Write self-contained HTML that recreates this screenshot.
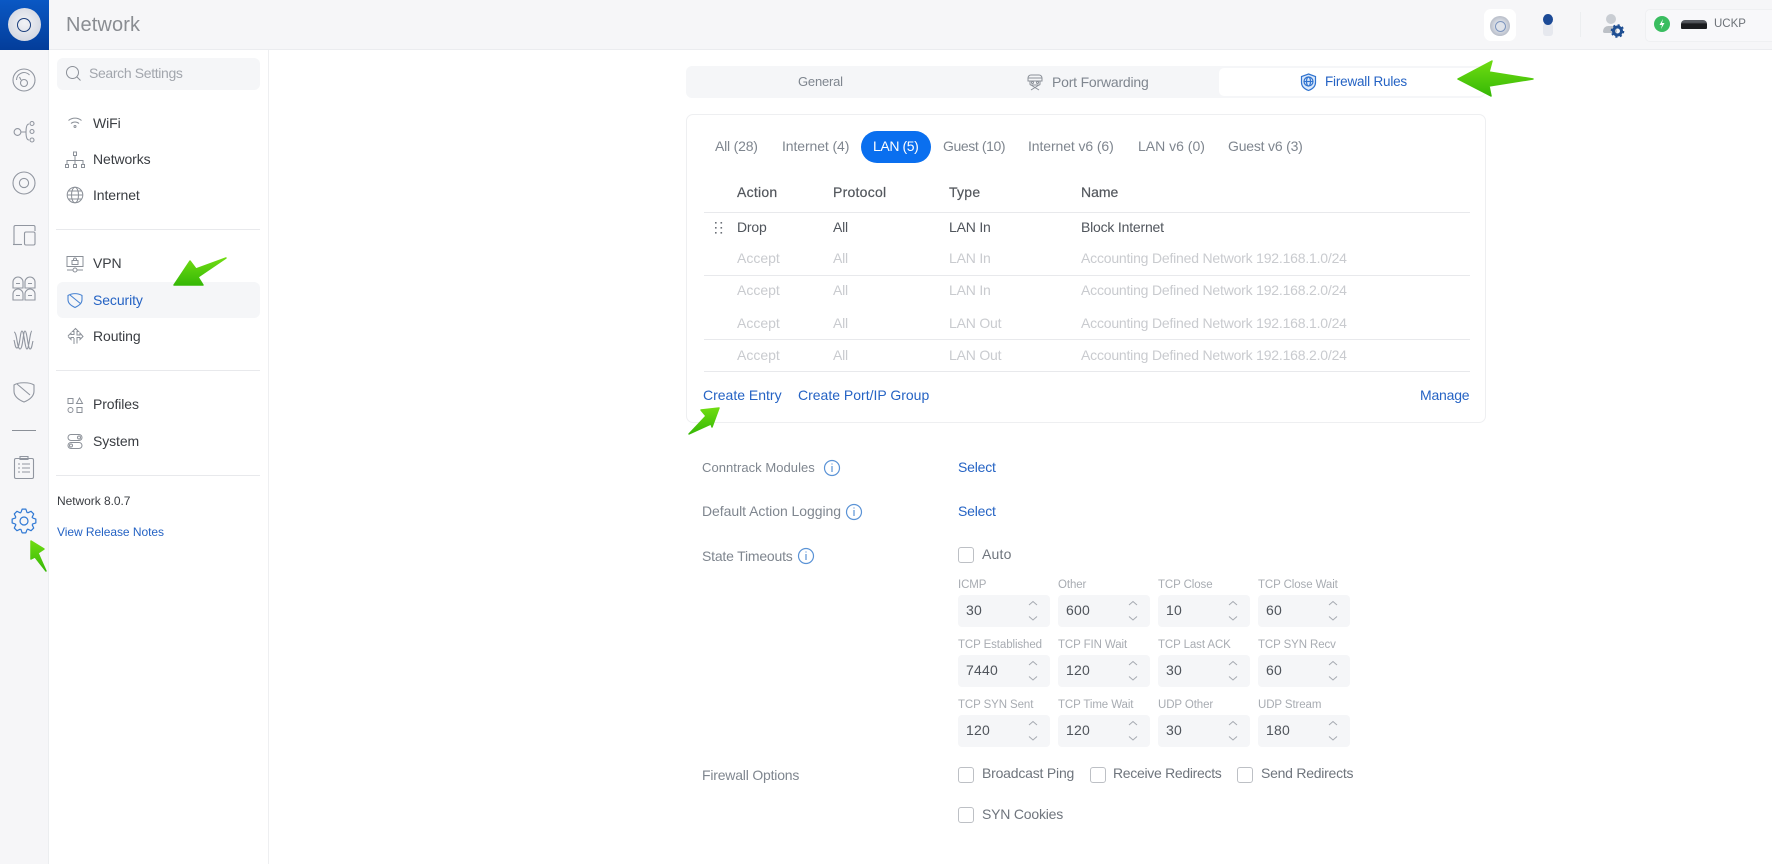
<!DOCTYPE html>
<html><head><meta charset="utf-8"><title>Network</title>
<style>
html,body{margin:0;padding:0;width:1772px;height:864px;overflow:hidden;background:#fff;font-family:"Liberation Sans",sans-serif;font-size:14px;letter-spacing:-.2px}
.t{position:absolute;white-space:nowrap;line-height:20px;height:20px}
.b{position:absolute}
.nav{color:#3a3d42;left:93px;letter-spacing:-.1px}
.blue{color:#2563c4}
.m{color:#7f868f}
.d{color:#50555c}
.l{color:#c9cbcf}
.h{color:#53575d;letter-spacing:.25px;-webkit-text-stroke:.2px #53575d}
.s{color:#a8acb2;font-size:11.5px;letter-spacing:-.1px}
.v{color:#50555c;font-size:14px;letter-spacing:.2px}
.o{color:#6f757d}
.box{position:absolute;background:#f5f6f8;border-radius:4px;width:92px;height:32px}
.cb{position:absolute;width:14px;height:14px;border:1px solid #bdc0c5;border-radius:3px;background:#fff}
.ln{position:absolute;height:1px;background:#e8e9ec}
svg{position:absolute;overflow:visible}
.ic{fill:none;stroke:#8b9098;stroke-width:1}
.ir{fill:none;stroke:#9196a0;stroke-width:1.1}
.ib{fill:none;stroke:#2f73cf;stroke-width:1.2}
</style></head><body>

<!-- header + rail -->
<div class="b" style="left:0;top:0;width:1772px;height:49px;background:#f6f6f8;border-bottom:1px solid #ebecef"></div>
<div class="b" style="left:0;top:50px;width:48px;height:814px;background:#f6f6f8;border-right:1px solid #eceef0"></div>
<div class="b" style="left:268px;top:50px;width:1px;height:814px;background:#eeeff1"></div>
<div class="b" style="left:0;top:0;width:49px;height:50px;background:linear-gradient(180deg,#0a58c4,#033d9a)"></div>
<div class="b" style="left:8px;top:8px;width:33px;height:33px;border-radius:50%;background:radial-gradient(circle at 50% 45%,#f2f3f6,#c9cedb)"></div>
<div class="b" style="left:17px;top:18px;width:12px;height:12px;border-radius:50%;border:1.5px solid #1c3f7d"></div>
<div class="t" style="left:66px;top:15px;font-size:20px;letter-spacing:.1px;color:#8a8d92">Network</div>

<!-- header right -->
<div class="b" style="left:1484px;top:9px;width:32px;height:32px;border-radius:7px;background:#fff"></div>
<div class="b" style="left:1490px;top:16px;width:20px;height:20px;border-radius:50%;background:radial-gradient(circle,#dfe3ea 30%,#aab0bd 85%)"></div>
<div class="b" style="left:1495px;top:21px;width:9px;height:9px;border-radius:50%;border:1px solid #7d95be"></div>
<div class="b" style="left:1543px;top:23px;width:10px;height:13px;border-radius:3px;background:#e6e8ee"></div>
<div class="b" style="left:1543px;top:14px;width:10px;height:11px;border-radius:50%;background:#1c4a96"></div>
<div class="b" style="left:1606px;top:14px;width:10px;height:10px;border-radius:50%;background:#c9cdd3"></div>
<div class="b" style="left:1603px;top:26px;width:14px;height:7px;border-radius:6px 6px 2px 2px;background:#bcc0c6"></div>
<svg style="left:1610px;top:22px" width="16" height="16" viewBox="0 0 16 16"><circle cx="7.500" cy="9" r="4" fill="none" stroke="#1f4f93" stroke-width="3"/><circle cx="7.500" cy="9" r="6" fill="none" stroke="#1f4f93" stroke-width="1.600" stroke-dasharray="2.200 2.500"/></svg>
<div class="b" style="left:1580px;top:12px;width:1px;height:25px;background:#eceef0"></div>
<div class="b" style="left:1645px;top:9px;width:127px;height:31px;background:#f8f8fa;border:1px solid #eff0f2;border-right:0;border-radius:5px 0 0 5px"></div>
<div class="b" style="left:1654px;top:16px;width:16px;height:16px;border-radius:50%;background:#3abd60"></div>
<svg style="left:1654px;top:16px" width="16" height="16" viewBox="0 0 16 16"><path d="M9 3 5.500 9H8l-1 4 3.500-6H8z" fill="#fff"/></svg>
<div class="b" style="left:1681px;top:20px;width:26px;height:9px;background:linear-gradient(180deg,#55585e 0,#55585e 25%,#1b1c1f 45%);border-radius:4px 4px 1px 1px"></div>
<div class="t" style="left:1714px;top:14px;font-size:11.500px;letter-spacing:0;color:#6d7278">UCKP</div>

<!-- rail icons -->
<svg style="left:0;top:0" width="49" height="600" viewBox="0 0 49 600">
<g class="ir">
<circle cx="24" cy="80" r="11"/><path d="M16.500 80a7.500 7.500 0 0 1 13-5"/><circle cx="24" cy="83" r="3.500"/><path d="M21 80l-1.500-3"/>
<circle cx="17.500" cy="132" r="3.400"/><path d="M21 132h5M26 132c0-5 1-8 3-8M26 132c0 5 1 8 3 8"/><circle cx="32" cy="123.500" r="2"/><circle cx="32" cy="131.500" r="2"/><circle cx="32" cy="140" r="2"/>
<circle cx="24" cy="183" r="11"/><circle cx="24" cy="183" r="4.600"/>
<path d="M14 244v-17a1.500 1.500 0 0 1 1.500-1.500h18a1.500 1.500 0 0 1 1.500 1.500v4"/><rect x="24.500" y="232" width="10.500" height="13" rx="1.500"/><path d="M13 244.500h9"/>
<path d="M13 288v-6a5 5 0 0 1 10 0v6zM25 288v-6a5 5 0 0 1 10 0v6zM13 300v-6a5 5 0 0 1 10 0v6zM25 300v-6a5 5 0 0 1 10 0v6zM16 283.500h4M28 283.500h4M16 295.500h4M28 295.500h4"/>
<path d="M14 332c3 0 3 17 6 17s3-18 5-18 3 18 5 18 2-5 3-8M14 340c1 3 1 8 3 8 3 0 3-17 5-17s3 18 5 18 3-18 5-18"/>
<path d="M14 385c4-3 16-3 20 0v6c0 6-5 9-10 11-5-2-10-5-10-11zM17 384l13 11"/>
<rect x="14.500" y="458.500" width="19" height="20" rx="1.500"/><path d="M20 456.500h8v3h-8zM22 464h8M22 468h8M22 472h8M18 464h2M18 468h2M18 472h2"/>
</g>
<path d="M12 430.500h24" stroke="#8b9098" stroke-width="1"/>
<g style="fill:none;stroke:#2f78d4;stroke-width:1.200;stroke-linejoin:round" transform="translate(24 521)"><circle r="4"/>
<path d="M-3.080 -8.460L-1.880 -11.850L1.880 -11.850L3.080 -8.460L3.800 -8.160"/>
<path transform="rotate(45)" d="M-3.080 -8.460L-1.880 -11.850L1.880 -11.850L3.080 -8.460L3.800 -8.160"/>
<path transform="rotate(90)" d="M-3.080 -8.460L-1.880 -11.850L1.880 -11.850L3.080 -8.460L3.800 -8.160"/>
<path transform="rotate(135)" d="M-3.080 -8.460L-1.880 -11.850L1.880 -11.850L3.080 -8.460L3.800 -8.160"/>
<path transform="rotate(180)" d="M-3.080 -8.460L-1.880 -11.850L1.880 -11.850L3.080 -8.460L3.800 -8.160"/>
<path transform="rotate(225)" d="M-3.080 -8.460L-1.880 -11.850L1.880 -11.850L3.080 -8.460L3.800 -8.160"/>
<path transform="rotate(270)" d="M-3.080 -8.460L-1.880 -11.850L1.880 -11.850L3.080 -8.460L3.800 -8.160"/>
<path transform="rotate(315)" d="M-3.080 -8.460L-1.880 -11.850L1.880 -11.850L3.080 -8.460L3.800 -8.160"/>
</g>
</svg>

<!-- settings nav -->
<div class="b" style="left:57px;top:58px;width:203px;height:32px;background:#f5f6f8;border-radius:6px"></div>
<svg style="left:65px;top:65px" width="18" height="18" viewBox="0 0 18 18"><circle cx="7.500" cy="7.500" r="6" class="ic"/><path d="M12 12l3.500 3.500" class="ic"/></svg>
<div class="t" style="left:89px;top:63px;color:#a2a6ad;letter-spacing:-.35px">Search Settings</div>

<div class="t nav" style="top:113px">WiFi</div>
<div class="t nav" style="top:149px">Networks</div>
<div class="t nav" style="top:185px">Internet</div>
<div class="ln" style="left:56px;top:229px;width:204px"></div>
<div class="t nav" style="top:253px">VPN</div>
<div class="b" style="left:57px;top:282px;width:203px;height:36px;background:#f5f6f8;border-radius:6px"></div>
<div class="t nav blue" style="top:290px;color:#2563c4">Security</div>
<div class="t nav" style="top:326px">Routing</div>
<div class="ln" style="left:56px;top:370px;width:204px"></div>
<div class="t nav" style="top:394px">Profiles</div>
<div class="t nav" style="top:431px">System</div>
<div class="ln" style="left:56px;top:475px;width:204px"></div>
<div class="t" style="left:57px;top:491px;font-size:12px;letter-spacing:-.05px;color:#3a3d42">Network 8.0.7</div>
<div class="t blue" style="left:57px;top:522px;font-size:12px;letter-spacing:-.05px">View Release Notes</div>

<svg style="left:60px;top:110px" width="30" height="400" viewBox="60 110 30 400">
<g class="ic">
<path d="M68.500 120.500a10 10 0 0 1 13 0M71 123.500a6 6 0 0 1 8 0"/><circle cx="75" cy="126.500" r="1"/>
<path d="M75 155.500v5M67 164.500v-4h16v4M75 160.500v4"/><rect x="73.500" y="152" width="3" height="3.500"/><rect x="65.500" y="164.500" width="3" height="3"/><rect x="73.500" y="164.500" width="3" height="3"/><rect x="81.500" y="164.500" width="3" height="3"/>
<circle cx="75" cy="195" r="7.800"/><ellipse cx="75" cy="195" rx="3.500" ry="7.800"/><path d="M67.200 195h15.600M68.500 191h13M68.500 199h13"/>
<rect x="67" y="256.500" width="16" height="10"/><rect x="72" y="260.500" width="6" height="4"/><path d="M73.500 260.500v-1a1.500 1.500 0 0 1 3 0v1M67 270h6M77 270h6"/><circle cx="75" cy="270" r="2"/>
<path d="M68 336l3-3v1.500h3v-3h-1.500l3-3 3 3H77v3.500h3V333l3 3.500-3 3v-2H77v6M74 338v6M68 336.500l3 3v-2h3"/>
<rect x="68" y="398.500" width="5" height="5"/><path d="M79.500 398l3 5.500h-6z"/><circle cx="70.500" cy="410" r="2.500"/><rect x="77" y="407.500" width="5" height="5"/>
<rect x="68" y="434.500" width="14" height="6" rx="3"/><rect x="68" y="442.500" width="14" height="6" rx="3"/><circle cx="79" cy="437.500" r="1.500"/><circle cx="71" cy="445.500" r="1.500"/>
</g>
<g style="fill:none;stroke:#4a84d2;stroke-width:1.100"><path d="M68 295.500c4-2.500 10-2.500 14 0v4c0 4-3 6-7 8-4-2-7-4-7-8zM70 295l11 9"/></g>
</svg>

<!-- tabs -->
<div class="b" style="left:686px;top:66px;width:799px;height:32px;background:#f5f6f8;border-radius:6px"></div>
<div class="b" style="left:1219px;top:68px;width:266px;height:28px;background:#fff;border-radius:5px"></div>
<div class="t m" style="left:798px;top:72px;font-size:13px">General</div>
<svg style="left:1026px;top:73px" width="18" height="18" viewBox="0 0 18 18"><g class="ic"><path d="M2 5a3 3 0 0 1 3-3h8a3 3 0 0 1 3 3v3H2zM4 8v3a1 1 0 0 0 1 1h8a1 1 0 0 0 1-1V8M5 12l8 5M13 12l-8 5M2 5h14"/><circle cx="6.500" cy="9.500" r="1"/><circle cx="11.500" cy="9.500" r="1"/></g></svg>
<div class="t m" style="left:1052px;top:72px">Port Forwarding</div>
<svg style="left:1300px;top:73px" width="17" height="18" viewBox="0 0 17 18"><path d="M8.500 1l7 2.500v6c0 4-3 6.500-7 8-4-1.500-7-4-7-8v-6z" fill="#dbe9fb" stroke="#2f73cf" stroke-width="1.200"/><circle cx="8.500" cy="8.500" r="4.500" class="ib"/><ellipse cx="8.500" cy="8.500" rx="2" ry="4.500" class="ib"/><path d="M4 8.500h9" class="ib"/></svg>
<div class="t blue" style="left:1325px;top:72px;font-size:13.500px">Firewall Rules</div>

<!-- card -->
<div class="b" style="left:686px;top:114px;width:798px;height:307px;border:1px solid #eeeff1;border-radius:7px"></div>
<div class="t m" style="left:715px;top:136px">All (28)</div>
<div class="t m" style="left:782px;top:136px;letter-spacing:-.1px">Internet (4)</div>
<div class="b" style="left:861px;top:131px;width:70px;height:32px;border-radius:16px;background:#0a6fef"></div>
<div class="t" style="left:873px;top:136px;color:#fff;letter-spacing:-.4px">LAN (5)</div>
<div class="t m" style="left:943px;top:136px;letter-spacing:-.4px">Guest (10)</div>
<div class="t m" style="left:1028px;top:136px;letter-spacing:-.1px">Internet v6 (6)</div>
<div class="t m" style="left:1138px;top:136px;letter-spacing:0">LAN v6 (0)</div>
<div class="t m" style="left:1228px;top:136px">Guest v6 (3)</div>

<div class="t h" style="left:737px;top:182px">Action</div>
<div class="t h" style="left:833px;top:182px">Protocol</div>
<div class="t h" style="left:949px;top:182px">Type</div>
<div class="t h" style="left:1081px;top:182px;letter-spacing:0">Name</div>
<div class="ln" style="left:704px;top:212px;width:766px"></div>

<svg style="left:715px;top:222px" width="8" height="12"><g fill="#6b7077"><rect x="0" y="0" width="1.600" height="1.600"/><rect x="5.500" y="0" width="1.600" height="1.600"/><rect x="0" y="5" width="1.600" height="1.600"/><rect x="5.500" y="5" width="1.600" height="1.600"/><rect x="0" y="10" width="1.600" height="1.600"/><rect x="5.500" y="10" width="1.600" height="1.600"/></g></svg>
<div class="t d" style="left:737px;top:217px">Drop</div><div class="t d" style="left:833px;top:217px">All</div><div class="t d" style="left:949px;top:217px">LAN In</div><div class="t d" style="left:1081px;top:217px">Block Internet</div>
<div class="t l" style="left:737px;top:248px;letter-spacing:0">Accept</div><div class="t l" style="left:833px;top:248px">All</div><div class="t l" style="left:949px;top:248px">LAN In</div><div class="t l" style="left:1081px;top:248px">Accounting Defined Network 192.168.1.0/24</div>
<div class="ln" style="left:704px;top:275px;width:766px"></div>
<div class="t l" style="left:737px;top:280px;letter-spacing:0">Accept</div><div class="t l" style="left:833px;top:280px">All</div><div class="t l" style="left:949px;top:280px">LAN In</div><div class="t l" style="left:1081px;top:280px">Accounting Defined Network 192.168.2.0/24</div>
<div class="t l" style="left:737px;top:313px;letter-spacing:0">Accept</div><div class="t l" style="left:833px;top:313px">All</div><div class="t l" style="left:949px;top:313px">LAN Out</div><div class="t l" style="left:1081px;top:313px">Accounting Defined Network 192.168.1.0/24</div>
<div class="ln" style="left:704px;top:339px;width:766px"></div>
<div class="t l" style="left:737px;top:345px;letter-spacing:0">Accept</div><div class="t l" style="left:833px;top:345px">All</div><div class="t l" style="left:949px;top:345px">LAN Out</div><div class="t l" style="left:1081px;top:345px">Accounting Defined Network 192.168.2.0/24</div>
<div class="ln" style="left:704px;top:371px;width:766px"></div>

<div class="t blue" style="left:703px;top:385px;letter-spacing:0">Create Entry</div>
<div class="t blue" style="left:798px;top:385px;letter-spacing:0">Create Port/IP Group</div>
<div class="t blue" style="left:1420px;top:385px">Manage</div>

<!-- options -->
<div class="t m" style="left:702px;top:458px;font-size:13px;letter-spacing:.05px">Conntrack Modules</div>
<div class="t m" style="left:702px;top:501px;letter-spacing:-.05px">Default Action Logging</div>
<div class="t m" style="left:702px;top:546px">State Timeouts</div>
<div class="t m" style="left:702px;top:765px">Firewall Options</div>
<svg style="left:820px;top:455px" width="60" height="120" viewBox="820 455 60 120"><g class="ib" style="stroke:#5b93d6"><circle cx="832" cy="468" r="7.500"/><path d="M832 466v6M832 463.500v1"/><circle cx="854" cy="512" r="7.500"/><path d="M854 510v6M854 507.500v1"/></g></svg>
<svg style="left:790px;top:545px" width="30" height="30"><g class="ib" style="stroke:#5b93d6"><circle cx="16" cy="11" r="7.500"/><path d="M16 9v6M16 6.500v1"/></g></svg>
<div class="t blue" style="left:958px;top:457px">Select</div>
<div class="t blue" style="left:958px;top:501px">Select</div>
<div class="cb" style="left:958px;top:547px"></div>
<div class="t o" style="left:982px;top:544px;letter-spacing:.2px">Auto</div>

<!-- timeouts -->
<div class="t s" style="left:958px;top:575px">ICMP</div><div class="t s" style="left:1058px;top:575px">Other</div><div class="t s" style="left:1158px;top:575px">TCP Close</div><div class="t s" style="left:1258px;top:575px">TCP Close Wait</div>
<div class="box" style="left:958px;top:595px"></div><div class="box" style="left:1058px;top:595px"></div><div class="box" style="left:1158px;top:595px"></div><div class="box" style="left:1258px;top:595px"></div>
<div class="t v" style="left:966px;top:600px">30</div><div class="t v" style="left:1066px;top:600px">600</div><div class="t v" style="left:1166px;top:600px">10</div><div class="t v" style="left:1266px;top:600px">60</div>

<div class="t s" style="left:958px;top:635px">TCP Established</div><div class="t s" style="left:1058px;top:635px">TCP FIN Wait</div><div class="t s" style="left:1158px;top:635px">TCP Last ACK</div><div class="t s" style="left:1258px;top:635px">TCP SYN Recv</div>
<div class="box" style="left:958px;top:655px"></div><div class="box" style="left:1058px;top:655px"></div><div class="box" style="left:1158px;top:655px"></div><div class="box" style="left:1258px;top:655px"></div>
<div class="t v" style="left:966px;top:660px">7440</div><div class="t v" style="left:1066px;top:660px">120</div><div class="t v" style="left:1166px;top:660px">30</div><div class="t v" style="left:1266px;top:660px">60</div>

<div class="t s" style="left:958px;top:695px">TCP SYN Sent</div><div class="t s" style="left:1058px;top:695px">TCP Time Wait</div><div class="t s" style="left:1158px;top:695px">UDP Other</div><div class="t s" style="left:1258px;top:695px">UDP Stream</div>
<div class="box" style="left:958px;top:715px"></div><div class="box" style="left:1058px;top:715px"></div><div class="box" style="left:1158px;top:715px"></div><div class="box" style="left:1258px;top:715px"></div>
<div class="t v" style="left:966px;top:720px">120</div><div class="t v" style="left:1066px;top:720px">120</div><div class="t v" style="left:1166px;top:720px">30</div><div class="t v" style="left:1266px;top:720px">180</div>

<svg style="left:1020px;top:595px" width="340" height="160" viewBox="1020 595 340 160"><g fill="none" stroke="#a6aab1" stroke-width="1">
<path d="M1029 605l4-3.500 4 3.500M1029 616.500l4 3.500 4-3.500M1129 605l4-3.500 4 3.500M1129 616.500l4 3.500 4-3.500M1229 605l4-3.500 4 3.500M1229 616.500l4 3.500 4-3.500M1329 605l4-3.500 4 3.500M1329 616.500l4 3.500 4-3.500"/>
<path d="M1029 665l4-3.500 4 3.500M1029 676.500l4 3.500 4-3.500M1129 665l4-3.500 4 3.500M1129 676.500l4 3.500 4-3.500M1229 665l4-3.500 4 3.500M1229 676.500l4 3.500 4-3.500M1329 665l4-3.500 4 3.500M1329 676.500l4 3.500 4-3.500"/>
<path d="M1029 725l4-3.500 4 3.500M1029 736.500l4 3.500 4-3.500M1129 725l4-3.500 4 3.500M1129 736.500l4 3.500 4-3.500M1229 725l4-3.500 4 3.500M1229 736.500l4 3.500 4-3.500M1329 725l4-3.500 4 3.500M1329 736.500l4 3.500 4-3.500"/>
</g></svg>

<div class="cb" style="left:958px;top:767px"></div><div class="t o" style="left:982px;top:763px">Broadcast Ping</div>
<div class="cb" style="left:1090px;top:767px"></div><div class="t o" style="left:1113px;top:763px;letter-spacing:-.3px">Receive Redirects</div>
<div class="cb" style="left:1237px;top:767px"></div><div class="t o" style="left:1261px;top:763px;letter-spacing:-.25px">Send Redirects</div>
<div class="cb" style="left:958px;top:807px"></div><div class="t o" style="left:982px;top:804px">SYN Cookies</div>

<!-- green arrows -->
<svg style="left:0;top:0" width="1772" height="864" viewBox="0 0 1772 864">
<defs><linearGradient id="g" x1="0" y1="0" x2="0" y2="1"><stop offset="0" stop-color="#6fdc12"/><stop offset="1" stop-color="#36b806"/></linearGradient></defs>
<g fill="url(#g)" stroke="url(#g)" stroke-width="1.500" stroke-linejoin="round">
<path d="M1458 79 1492 61 1489 72 1533 79 1489 86 1491 96z"/>
<path d="M174 285 190 261 196 269 226 258 198 277 203 285z"/>
<path d="M31 541 44 549 38 553 46 571 35 557 31 559z"/>
<path d="M719 408 701 410 706 416 689 434 711 424 712 427z"/>
</g></svg>

</body></html>
